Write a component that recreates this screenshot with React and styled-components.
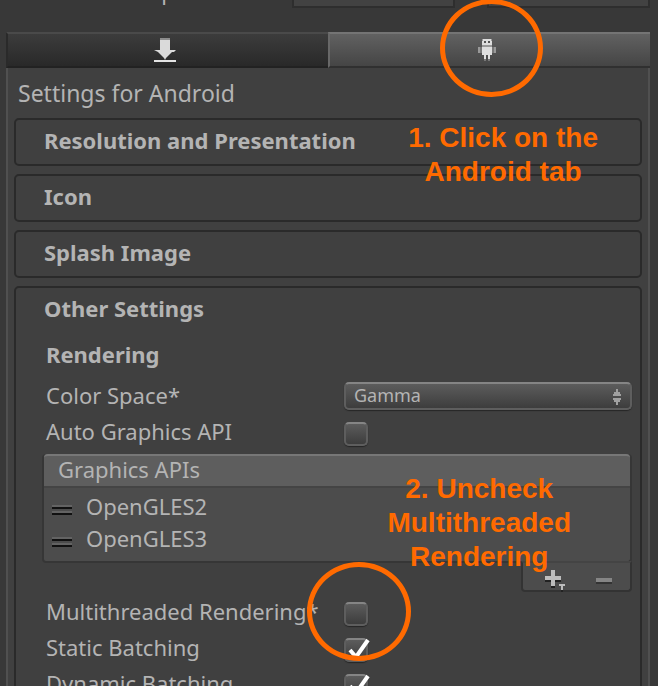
import React from 'react';
import styled, { createGlobalStyle, css } from 'styled-components';

const GlobalStyle = createGlobalStyle`
  *, *::before, *::after { box-sizing: border-box; }
  body {
    margin: 0;
    background: #383838;
    color: #b4b4b4;
    font-family: "Noto Sans", "Open Sans", sans-serif;
    font-size: 22px;
    line-height: 32px;
  }
  button, input, select { font: inherit; color: inherit; }
`;

const Inspector = styled.main`
  height: 100vh;
  overflow: hidden;
  padding: 0 8px 0 6px;
`;

const HotspotRow = styled.div`
  display: flex;
  align-items: flex-end;
  height: 8px;
  margin-bottom: 24px;
  overflow: hidden;
`;

const HotspotLabel = styled.span`
  width: 286px;
  flex: none;
  padding-left: 32px;
  line-height: 34px;
`;

const HotspotFields = styled.div`
  display: flex;
  flex: 1;
  min-width: 0;
  gap: 32px;
`;

const HotspotField = styled.input`
  flex: 1;
  min-width: 0;
  height: 32px;
  padding: 0 8px;
  border: 2px solid #2e2e2e;
  border-radius: 0;
  background: #424242;
`;

const TabBar = styled.div`
  display: flex;
  position: relative;
`;

const Tab = styled.button`
  flex: 1;
  display: flex;
  align-items: center;
  justify-content: center;
  height: 36px;
  padding: 0 6px 0 0;
  border: 0;
  border-top: 2px solid #4a4a4a;
  border-bottom: 2px solid #222;
  border-left: 2px solid #2a2a2a;
  background: linear-gradient(#3c3c3c, #292929);
  ${(p) => p.$active && css`
    border-top-color: #747474;
    border-bottom-color: #303030;
    border-left-color: #686868;
    background: linear-gradient(#616161, #454545);
  `}
`;

const Panel = styled.section`
  border: 2px solid #505050;
  border-width: 0 2px;
  background: #404040;
  padding: 8px 6px 0;
`;

const PanelTitle = styled.h1`
  margin: 0 0 8px;
  padding-left: 4px;
  font-size: 23px;
  font-weight: 400;
  line-height: 34px;
`;

const Sections = styled.div`
  position: relative;
  display: flex;
  flex-direction: column;
  gap: 8px;
`;

const Section = styled.section`
  border: 2px solid #2a2a2a;
  border-radius: 5px;
`;

const SectionHeader = styled.button`
  display: block;
  width: 100%;
  height: 44px;
  padding: 0 28px 4px;
  border: 0;
  background: none;
  font-weight: 700;
  text-align: left;
`;

const SectionBody = styled.div`
  padding: 2px 8px 0 30px;
`;

const GroupTitle = styled.h2`
  margin: 0 0 4px;
  font-size: 22px;
  font-weight: 700;
  line-height: 40px;
`;

const Row = styled.div`
  display: grid;
  grid-template-columns: 298px 1fr;
  height: 36px;
`;

const RowLabel = styled.label`
  line-height: 34px;
  white-space: nowrap;
`;

const raised = css`
  border: 2px solid #5e5e5e;
  border-top-color: #858585;
  border-radius: 5px;
  background: linear-gradient(#5c5c5c, #3d3d3d);
  box-shadow: 0 1px 1px #262626;
`;

const Popup = styled.div`
  position: relative;
  margin-top: 4px;
  height: 28px;
`;

const PopupSelect = styled.select`
  ${raised}
  appearance: none;
  display: block;
  width: 100%;
  height: 28px;
  padding: 0 32px 2px 8px;
  font-size: 18px;
  line-height: 22px;
`;

const PopupArrows = styled.svg`
  position: absolute;
  right: 10px;
  top: 7px;
  pointer-events: none;
`;

const Toggle = styled.span`
  position: relative;
  width: 24px;
  height: 24px;
  margin-top: 8px;
`;

const ToggleInput = styled.input`
  ${raised}
  appearance: none;
  display: block;
  width: 24px;
  height: 24px;
  margin: 0;
`;

const Tick = styled.svg`
  position: absolute;
  left: 3px;
  top: 0;
  pointer-events: none;
  ${ToggleInput}:not(:checked) + & { display: none; }
`;

const ApiList = styled.div`
  position: relative;
  margin: 4px 0 2px -4px;
`;

const ApiBox = styled.div`
  border: 2px solid #363636;
  border-top: 0;
  border-radius: 4px;
  background: #4c4c4c;
`;

const ApiHeader = styled.div`
  height: 34px;
  padding-left: 14px;
  border-top: 2px solid #777;
  border-bottom: 2px solid #444;
  border-radius: 4px 4px 0 0;
  background: #5e5e5e;
  line-height: 26px;
`;

const ApiItems = styled.ul`
  margin: 0;
  padding: 2px 8px 7px;
  list-style: none;
`;

const ApiItem = styled.li`
  display: flex;
  align-items: center;
  gap: 14px;
  height: 32px;
`;

const Grip = styled.svg`
  margin-top: 8px;
`;

const ApiFooter = styled.div`
  display: flex;
  justify-content: space-around;
  width: 111px;
  height: 31px;
  margin: -2px 0 0 auto;
  padding: 8px 2px 0 6px;
  border: 2px solid #333;
  border-top-color: #444;
  border-radius: 0 0 4px 4px;
  background: #4c4c4c;
`;

const FooterButton = styled.button`
  display: flex;
  align-items: center;
  padding: 0;
  border: 0;
  background: none;
`;

const Ring = styled.div`
  position: absolute;
  border: 5px solid #ff6a00;
  border-radius: 50%;
  pointer-events: none;
`;

const TabRing = styled(Ring)`
  right: 107px;
  top: -33px;
  width: 103px;
  height: 98px;
`;

const ToggleRing = styled(Ring)`
  left: -37px;
  top: -40px;
  width: 104px;
  height: 99px;
  z-index: 1;
`;

const Note = styled.p`
  position: absolute;
  margin: 0;
  color: #ff6a00;
  font: 700 28px/34px "Liberation Sans", Arial, sans-serif;
  text-align: center;
  white-space: nowrap;
  pointer-events: none;
`;

const TabNote = styled(Note)`
  right: 44px;
  top: 3px;
`;

const ToggleNote = styled(Note)`
  right: 61px;
  top: 18px;
`;

function DownloadIcon() {
  return (
    <svg width="22" height="24" viewBox="0 0 22 24" aria-hidden="true">
      <path fill="#8c8c8c" d="M6 0h10v2H6z" />
      <path fill="#dadada" d="M6 2h10v10h6l-2 2h-2l-2 2-2 2-2 2-1 2-1-2-2-2-2-2-2-2H4l-4-2h6z" />
      <path fill="#e4e4e4" d="M0 22h22v2H0z" />
    </svg>
  );
}

function AndroidIcon() {
  return (
    <svg width="18" height="22" viewBox="0 0 18 22" shapeRendering="crispEdges" aria-hidden="true">
      <path fill="#999" d="M4 0h10v2H4zM4 6h10v2H4zM0 8h2v6H0zM16 8h2v6h-2z" />
      <path fill="#777" d="M2 8h2v6H2zM14 8h2v6h-2zM6 20h2v2H6zM10 20h2v2h-2z" />
      <path fill="#dedede" d="M5 0h8v2h1v4H4V2h1zM4 8h10v8h-2v4h-2v-4H8v4H6v-4H4z" />
      <path fill="#555" d="M6 2h2v2H6zM10 2h2v2h-2z" />
    </svg>
  );
}

function PlusIcon() {
  return (
    <svg width="20" height="22" viewBox="0 0 20 22" shapeRendering="crispEdges" aria-hidden="true">
      <path fill="#222" d="M0 8h16v4H0zM6 14h4v4H6zM16 20h2v2h-2z" />
      <path fill="#bdbdbd" d="M6 0h4v6h6v4h-6v6H6v-6H0V6h6zM14 14h6v2h-2v4h-2v-4h-2z" />
    </svg>
  );
}

function MinusIcon() {
  return (
    <svg width="16" height="6" viewBox="0 0 16 6" shapeRendering="crispEdges" aria-hidden="true">
      <path fill="#333" d="M0 4h16v2H0z" />
      <path fill="#858585" d="M0 0h16v4H0z" />
    </svg>
  );
}

function GripIcon() {
  return (
    <Grip width="20" height="10" viewBox="0 0 20 10" shapeRendering="crispEdges" aria-hidden="true">
      <path fill="#636363" d="M0 0h20v2H0zM0 6h20v2H0z" />
      <path fill="#111" d="M0 2h20v2H0zM0 8h20v2H0z" />
    </Grip>
  );
}

function ToggleRow({ id, label, checked = false, ringed = false }) {
  return (
    <Row>
      <RowLabel htmlFor={id}>{label}</RowLabel>
      <Toggle>
        <ToggleInput id={id} type="checkbox" defaultChecked={checked} />
        <Tick width="24" height="22" viewBox="0 0 24 22" aria-hidden="true">
          <path d="M3 12l6 7L21 2" fill="none" stroke="#fff" strokeWidth="4" />
        </Tick>
        {ringed && <ToggleRing />}
      </Toggle>
    </Row>
  );
}

export default function App() {
  return (
    <>
      <GlobalStyle />
      <Inspector>
        <HotspotRow>
          <HotspotLabel>Cursor Hotspot</HotspotLabel>
          <HotspotFields>
            <HotspotField aria-label="Cursor Hotspot X" />
            <HotspotField aria-label="Cursor Hotspot Y" />
          </HotspotFields>
        </HotspotRow>
        <TabBar>
          <Tab type="button" aria-label="Standalone"><DownloadIcon /></Tab>
          <Tab type="button" aria-label="Android" $active><AndroidIcon /></Tab>
          <TabRing />
        </TabBar>
        <Panel>
          <PanelTitle>Settings for Android</PanelTitle>
          <Sections>
            <Section><SectionHeader type="button">Resolution and Presentation</SectionHeader></Section>
            <Section><SectionHeader type="button">Icon</SectionHeader></Section>
            <Section><SectionHeader type="button">Splash Image</SectionHeader></Section>
            <Section>
              <SectionHeader type="button">Other Settings</SectionHeader>
              <SectionBody>
                <GroupTitle>Rendering</GroupTitle>
                <Row>
                  <RowLabel htmlFor="color-space">Color Space*</RowLabel>
                  <Popup>
                    <PopupSelect id="color-space" defaultValue="Gamma">
                      <option>Gamma</option>
                      <option>Linear</option>
                    </PopupSelect>
                    <PopupArrows width="10" height="16" viewBox="0 0 10 16" aria-hidden="true">
                      <path fill="#a0a0a0" d="M4 0h2v3h2v2h1v2H1V5h1V3h2zM1 9h8v2H8v2H6v3H4v-3H2v-2H1z" />
                    </PopupArrows>
                  </Popup>
                </Row>
                <ToggleRow id="auto-api" label="Auto Graphics API" />
                <ApiList>
                  <ApiBox>
                    <ApiHeader>Graphics APIs</ApiHeader>
                    <ApiItems>
                      <ApiItem><GripIcon />OpenGLES2</ApiItem>
                      <ApiItem><GripIcon />OpenGLES3</ApiItem>
                    </ApiItems>
                  </ApiBox>
                  <ApiFooter>
                    <FooterButton type="button" aria-label="Add"><PlusIcon /></FooterButton>
                    <FooterButton type="button" aria-label="Remove"><MinusIcon /></FooterButton>
                  </ApiFooter>
                  <ToggleNote>2. Uncheck<br />Multithreaded<br />Rendering</ToggleNote>
                </ApiList>
                <ToggleRow id="multithreaded" label="Multithreaded Rendering*" ringed />
                <ToggleRow id="static-batching" label="Static Batching" checked />
                <ToggleRow id="dynamic-batching" label="Dynamic Batching" checked />
              </SectionBody>
            </Section>
            <TabNote>1. Click on the<br />Android tab</TabNote>
          </Sections>
        </Panel>
      </Inspector>
    </>
  );
}
